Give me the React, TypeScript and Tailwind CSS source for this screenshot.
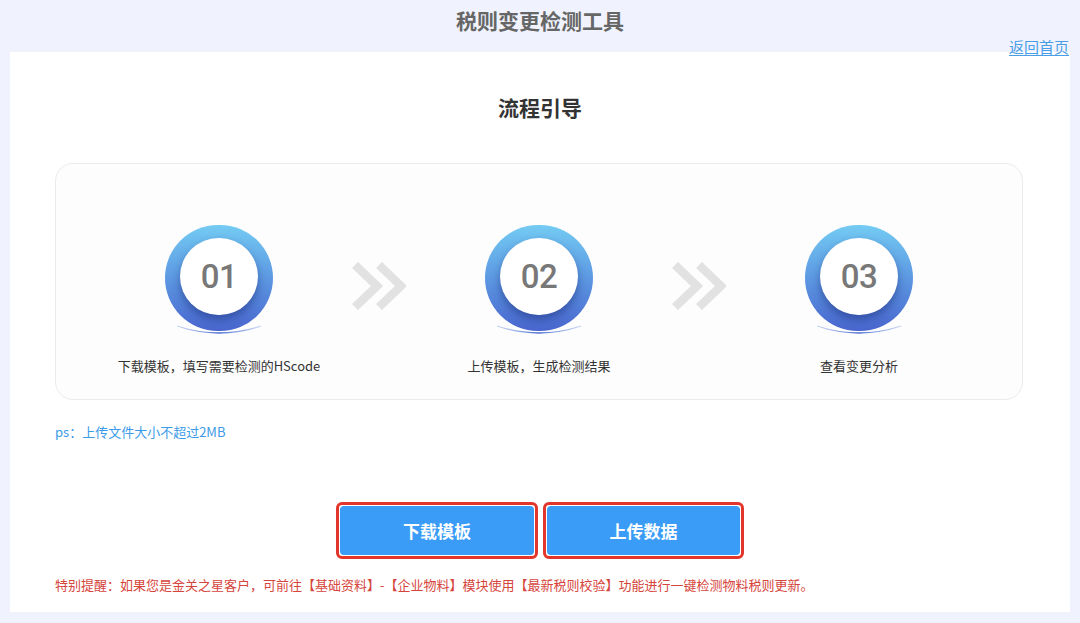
import React from 'react';

const FONT = { fontFamily: '"Noto Sans CJK SC", "Noto Sans", sans-serif' };

const steps = [
  { no: '01', label: '下载模板，填写需要检测的HScode' },
  { no: '02', label: '上传模板，生成检测结果' },
  { no: '03', label: '查看变更分析' },
];

const StepCircle: React.FC<{ no: string }> = ({ no }) => (
  <div className="relative w-[108px] h-[114px]">
    <div className="w-[108px] h-[106px] rounded-full bg-linear-to-b from-[#74cbf3] to-[#4a66cf] flex items-center justify-center">
      <div className="w-[78px] h-[77px] -mt-[3px] rounded-full bg-white shadow-[0_5px_8px_rgba(25,45,120,0.5)] flex items-center justify-center">
        <span
          className="text-[33px] font-medium text-[#787878] tracking-[-0.5px]"
          style={{ fontFamily: 'Roboto, "Liberation Sans", sans-serif' }}
        >
          {no}
        </span>
      </div>
    </div>
    {/* thin arc under the ring */}
    <svg className="absolute left-[11px] top-[100px]" width="86" height="10" viewBox="0 0 86 10">
      <defs>
        <linearGradient id={`arc-${no}`} x1="0" x2="1" y1="0" y2="0">
          <stop offset="0" stopColor="#6a8ee0" stopOpacity="0.35" />
          <stop offset="0.5" stopColor="#4a6dd0" stopOpacity="1" />
          <stop offset="1" stopColor="#6a8ee0" stopOpacity="0.35" />
        </linearGradient>
      </defs>
      <path d="M1 1 Q43 15 85 1" fill="none" stroke={`url(#arc-${no})`} strokeWidth="1.3" />
    </svg>
  </div>
);

const Arrow: React.FC = () => (
  <div className="w-[96px] flex justify-center mt-[37px]">
    <svg width="54" height="48" viewBox="0 0 54 48">
      <polyline points="3,3 25,24 3,45" fill="none" stroke="#e2e2e2" strokeWidth="8.5" />
      <polyline points="27,3 49,24 27,45" fill="none" stroke="#e2e2e2" strokeWidth="8.5" />
    </svg>
  </div>
);

export default function App() {
  return (
    <div className="min-h-screen bg-[#f0f3fd]" style={FONT}>
      <div className="h-[42px] flex items-center justify-center">
        <h1 className="text-[21px] font-bold text-[#666]">税则变更检测工具</h1>
      </div>
      <div className="h-[10px] flex justify-end pr-[11px] relative z-10">
        <a href="#" className="text-[15px] leading-[10px] text-[#4a9ee8] underline underline-offset-2">
          返回首页
        </a>
      </div>

      <div className="mx-[10px] h-[560px] bg-white flex flex-col">
        <h2 className="pt-[42px] text-center text-[21px] leading-[26px] font-bold text-[#333]">流程引导</h2>

        <div className="mt-[43px] ml-[45px] mr-[47px] h-[237px] rounded-[18px] border border-[#ebebeb] bg-[#fdfdfd] pt-[61px]">
          <div className="flex justify-center items-start">
            {steps.map((s, i) => (
              <React.Fragment key={s.no}>
                {i > 0 && <Arrow />}
                <div className="w-[224px] flex flex-col items-center">
                  <StepCircle no={s.no} />
                  <p className="mt-[18px] text-[13px] leading-[18px] text-[#333] whitespace-nowrap">{s.label}</p>
                </div>
              </React.Fragment>
            ))}
          </div>
        </div>

        <p className="mt-[23px] px-[45px] text-[13px] leading-[18px] text-[#3b9be8]">ps：上传文件大小不超过2MB</p>

        <div className="mt-[61px] flex justify-center gap-[5px]">
          <div className="rounded-[6px] border-[3px] border-[#e2352c] p-[1px] bg-white">
            <button className="w-[194px] h-[49px] rounded-[4px] bg-[#3a9cf6] text-white text-[17px] font-bold">
              下载模板
            </button>
          </div>
          <div className="rounded-[6px] border-[3px] border-[#e2352c] p-[1px] bg-white">
            <button className="w-[193px] h-[49px] rounded-[4px] bg-[#3a9cf6] text-white text-[17px] font-bold">
              上传数据
            </button>
          </div>
        </div>

        <p className="mt-[17px] px-[45px] text-[13px] leading-[18px] text-[#d6453c] whitespace-nowrap">
          特别提醒：如果您是金关之星客户，可前往【基础资料】-【企业物料】模块使用【最新税则校验】功能进行一键检测物料税则更新。
        </p>
      </div>
    </div>
  );
}
